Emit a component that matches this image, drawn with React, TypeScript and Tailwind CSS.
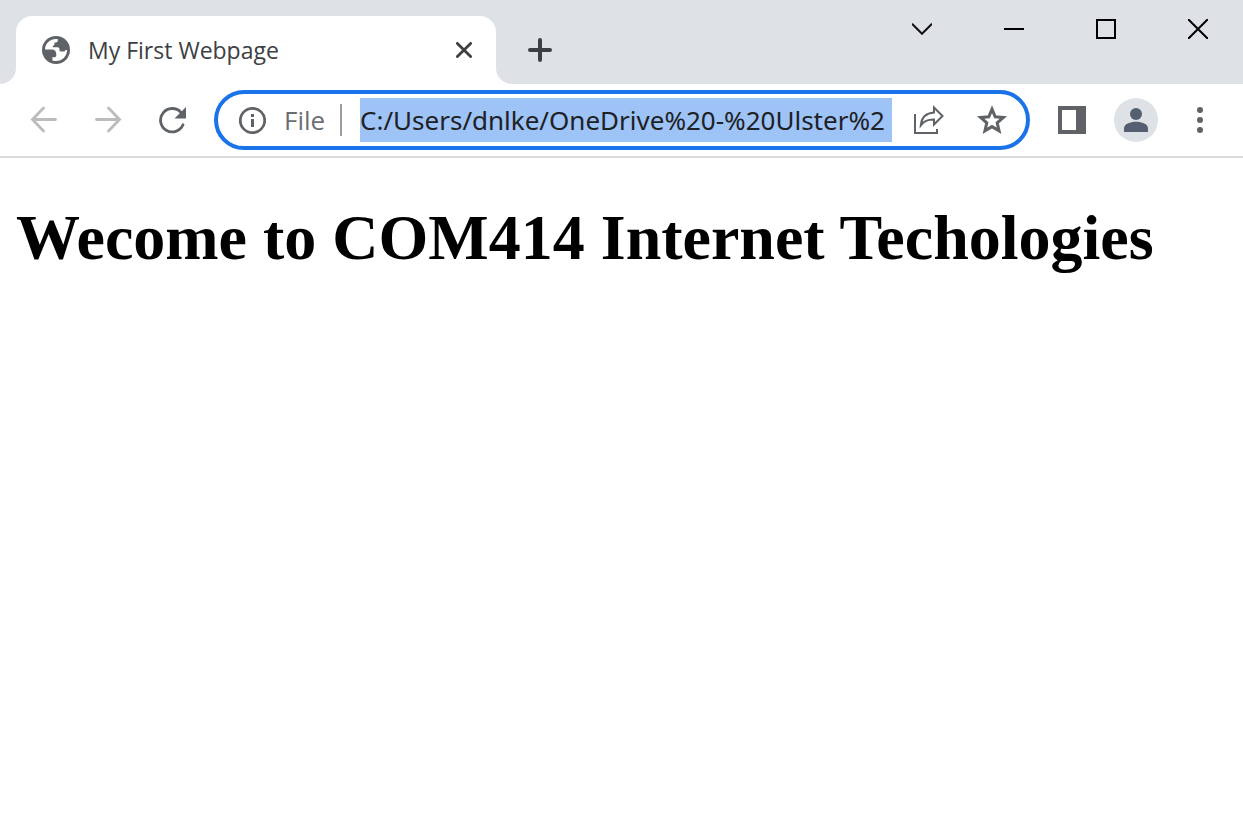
const iconButton = "flex h-11 w-16 shrink-0 items-center justify-center";
const windowButton = "flex h-[58px] w-[92px] items-center justify-center pl-0.5";

const GlobeIcon = () => (
  <svg width="28" height="28" viewBox="0 0 28 28" className="shrink-0" aria-hidden="true">
    <circle cx="14" cy="14" r="14" fill="#5f6368" />
    <path
      fill="#fff"
      d="M3 13.5C3.2 7.5 8 3 14 3h1.8v1.6c0 1.2-.9 2-2 2h-1.3v1.2c0 1-.6 1.700-1.600 1.900v1.600h4.800c1.100 0 1.700.8 1.700 1.800v.6c0 1.100.8 1.800 1.900 1.800h2.600c.9 0 1.300-.7 1.500-1.500h1.700C24.900 20.400 20 25 14 25c-1.300 0-2.500-.2-3.600-.6v-3.200h2.200c1 0 1.700-.7 1.700-1.700v-.6c0-3.700-1.500-5.400-5.100-5.400z"
    />
  </svg>
);

const TabStrip = () => {
  return (
    <header className="flex h-[84px] items-end bg-[#dee1e6]">
      <div className="h-4 w-4 shrink-0 bg-white">
        <div className="h-4 rounded-br-2xl bg-[#dee1e6]" />
      </div>
      <div className="flex h-[68px] w-[480px] items-center rounded-t-2xl bg-white pr-6 pl-[26px]">
        <GlobeIcon />
        <span className="ml-[18px] flex-1 truncate text-[23px] leading-8 text-[#3c4043]">
          My First Webpage
        </span>
        <button type="button" aria-label="Close tab">
          <svg width="16" height="16" viewBox="0 0 16 16" stroke="#3c4043" strokeWidth="2.8" strokeLinecap="round">
            <path d="M1.4 1.4l13.2 13.2M14.6 1.4L1.4 14.6" />
          </svg>
        </button>
      </div>
      <div className="h-4 w-4 shrink-0 bg-white">
        <div className="h-4 rounded-bl-2xl bg-[#dee1e6]" />
      </div>
      <button type="button" aria-label="New tab" className="flex h-[68px] w-14 items-center justify-center">
        <svg width="24" height="24" viewBox="0 0 24 24" stroke="#3c4043" strokeWidth="4" strokeLinecap="round">
          <path d="M12 2v20M2 12h20" />
        </svg>
      </button>
      <div className="ml-auto flex self-start">
        <button type="button" aria-label="Search tabs" className={windowButton}>
          <svg width="20" height="12" viewBox="0 0 20 12" fill="none" stroke="#111" strokeWidth="2">
            <path d="M0 .8l10 10 10-10" />
          </svg>
        </button>
        <button type="button" aria-label="Minimize" className={windowButton}>
          <svg width="20" height="2" viewBox="0 0 20 2">
            <path fill="#000" d="M0 0h20v2H0z" />
          </svg>
        </button>
        <button type="button" aria-label="Maximize" className={windowButton}>
          <svg width="20" height="20" viewBox="0 0 20 20" fill="none" stroke="#000" strokeWidth="2">
            <path d="M1 1h18v18H1z" />
          </svg>
        </button>
        <button type="button" aria-label="Close" className={windowButton}>
          <svg width="20" height="20" viewBox="0 0 20 20" stroke="#000" strokeWidth="2">
            <path d="M0 0l20 20M20 0L0 20" />
          </svg>
        </button>
      </div>
    </header>
  );
};

const AddressBar = () => {
  return (
    <div className="flex h-[60px] min-w-0 flex-1 items-center rounded-full border-4 border-[#1a73e8] bg-white pl-5">
      <button type="button" aria-label="Site information" className="shrink-0">
        <svg width="28" height="28" viewBox="0 0 28 28">
          <circle cx="14.5" cy="14.5" r="12.2" fill="none" stroke="#5f6368" strokeWidth="2.8" />
          <path fill="#5f6368" d="M13 8h3v3h-3zM13 13h3v8h-3z" />
        </svg>
      </button>
      <label htmlFor="address" className="ml-[18px] w-[56px] shrink-0 text-[26px] leading-9 text-[#6b6f73]">
        File
      </label>
      <div className="h-8 w-0.5 shrink-0 bg-[#9a9da1]" />
      <input
        id="address"
        type="text"
        defaultValue="C:/Users/dnlke/OneDrive%20-%20Ulster%2"
        className="ml-[18px] h-11 min-w-0 flex-1 bg-[#9dc3f7] font-['Noto_Sans',sans-serif] text-[26px] text-[#202124] outline-none"
      />
      <button type="button" aria-label="Share this page" className="ml-5 shrink-0">
        <svg width="32" height="32" viewBox="0 0 32 32" fill="none" stroke="#5f6368" strokeWidth="2">
          <path d="M3 10v19h22v-4" />
          <path d="M22 3.5l8.5 8.5-8.5 8.500v-5c-6-.2-10 1.500-13.200 5.800C9.500 14 14 9 22 8.500z" />
        </svg>
      </button>
      <button type="button" aria-label="Bookmark this tab" className="mr-[18px] ml-8 shrink-0">
        <svg width="32" height="32" viewBox="0 0 32 32" fill="none" stroke="#5f6368" strokeWidth="3">
          <path d="M16 5.200l3.200 7.600 8.200.7-6.200 5.400 1.900 8L16 22.600l-7.100 4.300 1.900-8-6.200-5.400 8.200-.7z" />
        </svg>
      </button>
    </div>
  );
};

const Toolbar = () => {
  return (
    <nav className="flex h-[74px] items-center gap-2.5 border-b-2 border-[#dadce0] bg-white pr-[11px] pl-3">
      <div className="flex shrink-0">
        <button type="button" aria-label="Back" className={iconButton}>
          <svg width="28" height="28" viewBox="0 0 28 28" fill="none" stroke="#babcbe" strokeWidth="2.8" strokeLinecap="round">
            <path d="M25.500 13.500H2.500M13.500 2l-11 11.500 11 11.500" />
          </svg>
        </button>
        <button type="button" aria-label="Forward" className={iconButton}>
          <svg width="28" height="28" viewBox="0 0 28 28" fill="none" stroke="#babcbe" strokeWidth="2.8" strokeLinecap="round">
            <path d="M2.500 13.500h23M14.500 2l11 11.500-11 11.500" />
          </svg>
        </button>
        <button type="button" aria-label="Reload" className={iconButton}>
          <svg width="28" height="28" viewBox="0 0 28 28">
            <path
              d="M22.800 6.200A11.700 11.700 0 1 0 25 18.800"
              fill="none"
              stroke="#5f6368"
              strokeWidth="2.8"
              strokeLinecap="round"
            />
            <path fill="#5f6368" d="M28 1v11.500H16.500z" />
          </svg>
        </button>
      </div>
      <AddressBar />
      <div className="flex shrink-0">
        <button type="button" aria-label="Side panel" className={iconButton}>
          <svg width="28" height="28" viewBox="0 0 28 28">
            <path fill="#5f6368" fillRule="evenodd" d="M0 0h28v28H0zM4 4v20h14V4z" />
          </svg>
        </button>
        <button type="button" aria-label="Profile" className={iconButton}>
          <span className="flex h-11 w-11 items-center justify-center rounded-full bg-[#dee1e6]">
            <svg width="24" height="24" viewBox="0 0 24 24" fill="#555f72">
              <circle cx="12" cy="6" r="6" />
              <path d="M0 24v-3.500C0 16 6 13.800 12 13.800s12 2.200 12 6.700V24z" />
            </svg>
          </span>
        </button>
        <button type="button" aria-label="Menu" className={iconButton}>
          <svg width="6" height="26" viewBox="0 0 6 26" fill="#5f6368">
            <circle cx="3" cy="3" r="3" />
            <circle cx="3" cy="13" r="3" />
            <circle cx="3" cy="23" r="3" />
          </svg>
        </button>
      </div>
    </nav>
  );
};

const App = () => {
  return (
    <div className="min-h-screen bg-white font-['Open_Sans',sans-serif]">
      <TabStrip />
      <Toolbar />
      <main className="px-4 pt-11">
        <h1 className="font-['Liberation_Serif',serif] text-[64px] leading-[72px] font-bold text-black">
          Wecome to COM414 Internet Techologies
        </h1>
      </main>
    </div>
  );
};

export default App;
